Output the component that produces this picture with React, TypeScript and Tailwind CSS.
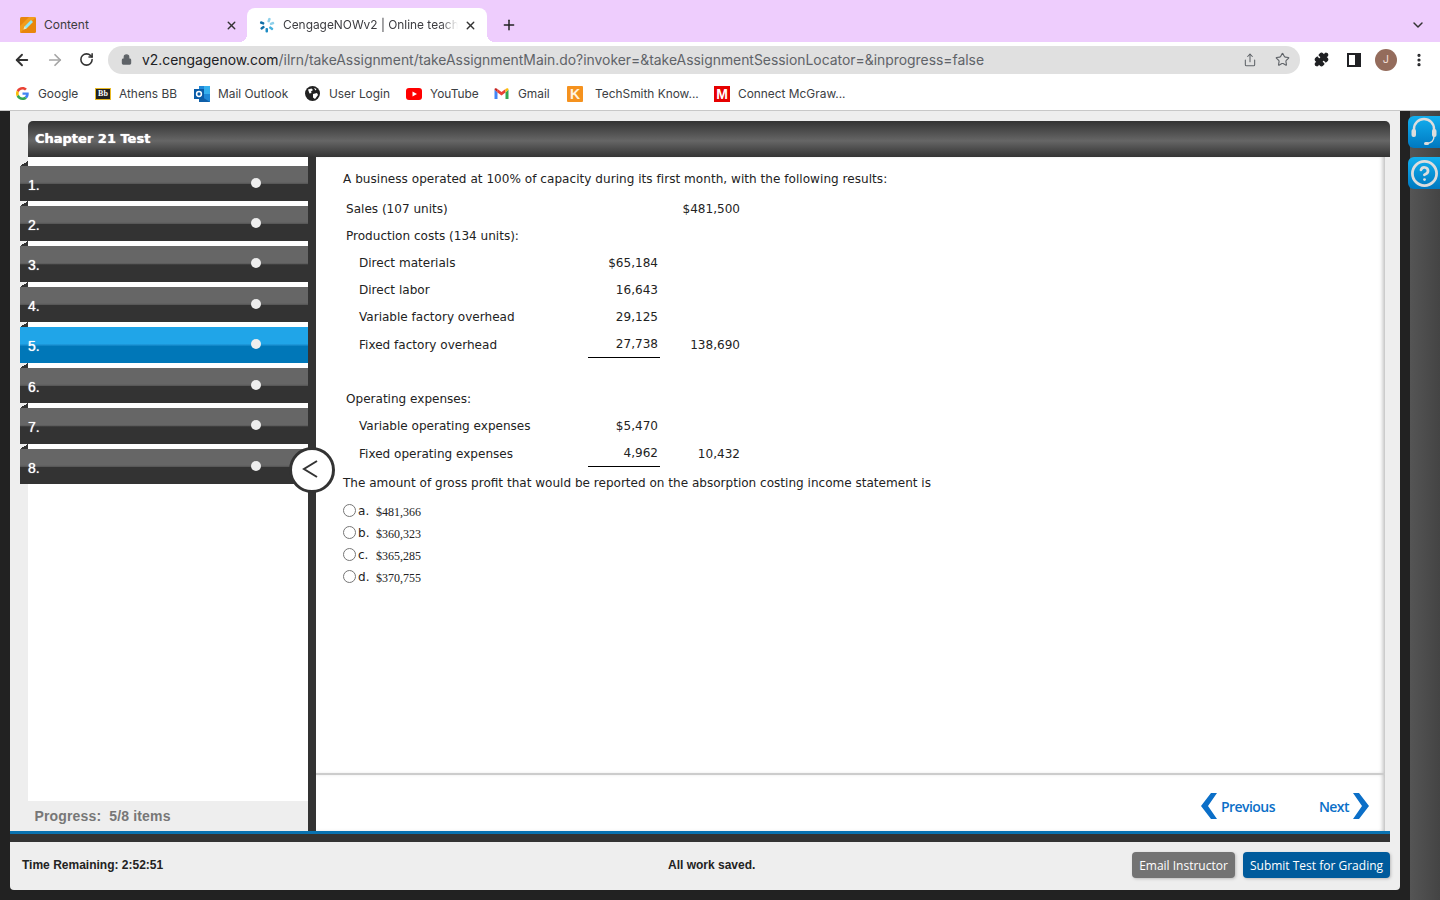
import React from "react";
import { ArrowLeft, ArrowRight, RotateCw, X, Plus, ChevronDown, Lock, Share, Star, Puzzle, MoreVertical, HelpCircle } from "lucide-react";

const Sans = "font-['Inter',sans-serif]";

function Favicon({ kind }: { kind: string }) {
  if (kind === "google")
    return (
      <svg width="13" height="13" viewBox="0 0 48 48">
        <path fill="#EA4335" d="M24 9.500c3.500 0 6.700 1.200 9.200 3.600l6.900-6.900C35.900 2.400 30.500 0 24 0 14.600 0 6.500 5.400 2.600 13.200l8 6.200C12.500 13.700 17.800 9.500 24 9.500z" />
        <path fill="#4285F4" d="M47 24.500c0-1.600-.1-3.100-.4-4.500H24v9h12.900c-.6 3-2.200 5.500-4.700 7.200l7.700 6c4.500-4.200 7.100-10.300 7.100-17.700z" />
        <path fill="#FBBC05" d="M10.600 28.600c-.5-1.400-.8-3-.8-4.600s.3-3.200.8-4.600l-8-6.200C.9 16.500 0 20.100 0 24s.9 7.500 2.600 10.800l8-6.200z" />
        <path fill="#34A853" d="M24 48c6.500 0 11.900-2.100 15.900-5.800l-7.700-6c-2.200 1.400-4.900 2.300-8.200 2.300-6.200 0-11.500-4.200-13.400-9.900l-8 6.200C6.500 42.600 14.600 48 24 48z" />
      </svg>
    );
  if (kind === "bb")
    return (
      <span className="flex w-[16px] h-[12px] items-center justify-center bg-[#222] border border-[#e8b923] text-white text-[8px] font-bold font-['Liberation_Serif',serif] leading-none">Bb</span>
    );
  if (kind === "outlook")
    return (
      <svg width="16" height="16" viewBox="0 0 16 16">
        <rect x="5" y="0" width="11" height="16" fill="#1e88d8" />
        <rect x="10" y="0" width="6" height="8" fill="#35b0ee" />
        <path d="M5 9l11 7H5z" fill="#0f5fa8" />
        <rect x="0" y="3" width="10" height="10" fill="#0a5ca8" />
        <circle cx="5" cy="8" r="2.400" fill="none" stroke="#fff" strokeWidth="1.500" />
      </svg>
    );
  if (kind === "globe")
    return (
      <svg width="15" height="15" viewBox="0 0 15 15">
        <circle cx="7.500" cy="7.500" r="7.500" fill="#222" />
        <path d="M3 3.500l3.500-1 1.500 1.500-2 1.500.5 1.500-2 .5zM8 8l4-1 1 2-3 4-2-1.500zM9 2l2.500 1-1 1.500z" fill="#fff" />
      </svg>
    );
  if (kind === "youtube")
    return (
      <svg width="16" height="12" viewBox="0 0 16 12">
        <rect width="16" height="12" rx="3" fill="#f00" />
        <path d="M6.500 3.500L11 6l-4.500 2.500z" fill="#fff" />
      </svg>
    );
  if (kind === "gmail")
    return (
      <svg width="15" height="11" viewBox="0 0 14 11">
        <path d="M0 1.500V11h3V4.500z" fill="#4285F4" />
        <path d="M14 1.500V11h-3V4.500z" fill="#34A853" />
        <path d="M3 4.500L7 7.500l4-3V1L7 4 3 1z" fill="#EA4335" />
        <path d="M0 1.500C0 .3 1.500-.4 3 1v3.500z" fill="#C5221F" />
        <path d="M14 1.500C14 .3 12.500-.4 11 1v3.500z" fill="#FBBC05" />
      </svg>
    );
  if (kind === "k")
    return (
      <span className="flex w-[16px] h-[16px] items-center justify-center rounded-[1px] bg-[#f5921e] text-[#fff3e0] text-[14px] font-bold leading-none font-['Liberation_Sans',sans-serif]">K</span>
    );
  return (
    <span className="flex w-[16px] h-[16px] items-center justify-center bg-[#e60000] text-white text-[14px] font-bold leading-none font-['Liberation_Sans',sans-serif]">M</span>
  );
}

const bookmarks = [
  { k: "google", t: "Google", w: "w-[79px]", g: "ml-[6px]" },
  { k: "bb", t: "Athens BB", w: "w-[99px]", g: "ml-[8px]" },
  { k: "outlook", t: "Mail Outlook", w: "w-[111px]", g: "ml-[8px]" },
  { k: "globe", t: "User Login", w: "w-[101px]", g: "ml-[8px]" },
  { k: "youtube", t: "YouTube", w: "w-[88px]", g: "ml-[8px]" },
  { k: "gmail", t: "Gmail", w: "w-[73px]", g: "ml-[8px]" },
  { k: "k", t: "TechSmith Know...", w: "w-[147px]", g: "ml-[12px]" },
  { k: "m", t: "Connect McGraw...", w: "w-[150px]", g: "ml-[8px]" },
];

function Spinner() {
  return (
    <svg width="16" height="16" viewBox="0 0 16 16">
      <rect x="7" y="0.500" width="2.500" height="4.500" rx="1" fill="#8fd0ea" transform="rotate(20 8 8)" />
      <rect x="7" y="0.500" width="2.500" height="4.500" rx="1" fill="#8fd0ea" transform="rotate(70 8 8)" />
      <rect x="7" y="0.500" width="2.500" height="4.500" rx="1" fill="#46b0dc" transform="rotate(125 8 8)" />
      <rect x="7" y="0.500" width="2.500" height="4.500" rx="1" fill="#1d8cc4" transform="rotate(180 8 8)" />
      <rect x="7" y="0.500" width="2.500" height="4.500" rx="1" fill="#0f6fa8" transform="rotate(235 8 8)" />
      <rect x="7" y="0.500" width="2.500" height="4.500" rx="1" fill="#0f6fa8" transform="rotate(290 8 8)" />
    </svg>
  );
}

function BrowserChrome() {
  return (
    <div className={`${Sans} bg-white`}>
      <div className="flex h-[42px] bg-[#eecdfd] pt-[8px] pl-[8px] text-[12px] text-[#3c3c40]">
        <div className="flex w-[239px] h-[34px] items-center pl-[12px] pr-[9px]">
          <svg width="16" height="16" viewBox="0 0 16 16" className="shrink-0">
            <rect width="16" height="16" rx="1.500" fill="#e8860c" />
            <path d="M0 16L16 0H9L0 9z" fill="#f6a623" opacity="0.700" />
            <path d="M3.500 12.500l1-3 6.500-6.500 2 2-6.500 6.500z" fill="#8fe6f5" />
            <path d="M3.500 12.500l1-3 2 2z" fill="#f8e3b0" />
          </svg>
          <span className="ml-[8px] flex-1">Content</span>
          <X size={13} strokeWidth={2.500} className="text-[#333]" />
        </div>
        <div className="relative flex w-[240px] h-[34px] items-center rounded-t-[8px] bg-white pl-[12px] pr-[10px]">
          <span className="absolute -left-[8px] bottom-0 h-[8px] w-[8px] bg-[radial-gradient(circle_at_0_0,transparent_8px,#fff_8px)]" />
          <span className="absolute -right-[8px] bottom-0 h-[8px] w-[8px] bg-[radial-gradient(circle_at_100%_0,transparent_8px,#fff_8px)]" />
          <Spinner />
          <span className="ml-[8px] w-[175px] shrink-0 overflow-hidden whitespace-nowrap text-[11.900px] [mask-image:linear-gradient(90deg,#000_90%,transparent)]">CengageNOWv2 | Online teach</span>
          <X size={13} strokeWidth={2.500} className="ml-[6px] shrink-0 text-[#333]" />
        </div>
        <div className="flex h-[34px] w-[44px] items-center justify-center">
          <Plus size={16} strokeWidth={2.200} className="text-[#222]" />
        </div>
        <div className="flex-1" />
        <div className="flex h-[34px] w-[45px] items-center justify-center">
          <ChevronDown size={16} strokeWidth={2.200} className="text-[#333]" />
        </div>
      </div>
      <div className="flex h-[35px] items-center bg-white">
        <div className="flex w-[108px] items-center pl-[13px] gap-[15px]">
          <ArrowLeft size={18} strokeWidth={2.500} className="text-[#333]" />
          <ArrowRight size={18} strokeWidth={2.300} className="text-[#a5a5a5]" />
          <RotateCw size={15} strokeWidth={2.500} className="text-[#333]" />
        </div>
        <div className="flex h-[28px] w-[1192px] items-center rounded-[14px] bg-[#e0e0e0] pl-[13px] pr-[10px]">
          <Lock size={11} strokeWidth={2.500} fill="#5f6368" className="text-[#5f6368]" />
          <span className="ml-[10px] flex-1 whitespace-nowrap pt-[1px] text-[13.900px] text-[#5f6368]">
            <span className="text-[#202124]">v2.cengagenow.com</span>/ilrn/takeAssignment/takeAssignmentMain.do?invoker=&amp;takeAssignmentSessionLocator=&amp;inprogress=false
          </span>
          <Share size={14} strokeWidth={1.800} className="text-[#5f6368] mr-[18px]" />
          <Star size={15} strokeWidth={1.800} className="text-[#5f6368]" />
        </div>
        <div className="flex flex-1 items-center pl-[14px]">
          <Puzzle size={15} fill="#202124" className="text-[#202124]" />
          <div className="ml-[18px] flex h-[14px] w-[14px] justify-end border-[2px] border-[#202124] bg-white">
            <div className="h-full w-[4px] bg-[#202124]" />
          </div>
          <div className="ml-[14px] flex h-[22px] w-[22px] items-center justify-center rounded-full bg-[#946c5c] text-[11px] text-[#f0dcd4]">J</div>
          <MoreVertical size={16} strokeWidth={2.800} className="ml-[14px] text-[#202124]" />
        </div>
      </div>
      <div className="flex h-[34px] items-center pl-[16px] pt-[1px] border-b border-[#c8c8c8] text-[11.900px] text-[#3c4043]">
        {bookmarks.map((b) => (
          <div key={b.t} className={`flex items-center ${b.w}`}>
            <span className="flex w-[16px] items-center justify-start"><Favicon kind={b.k} /></span>
            <span className={`${b.g} whitespace-nowrap`}>{b.t}</span>
          </div>
        ))}
      </div>
    </div>
  );
}

const items = ["1.", "2.", "3.", "4.", "5.", "6.", "7.", "8."];

function NavItem({ n, active }: { n: string; active: boolean }) {
  return (
    <div className="relative h-[40.450px]">
      <div className="h-[5px] w-[8px] bg-[linear-gradient(to_top_left,#333_50%,transparent_50%)]" />
      <div className={`relative flex h-[35.500px] w-[288px] items-end pb-[5.500px] pl-[8px] text-[14px] text-white [text-shadow:0_0_1px_#fff] font-['Liberation_Sans',sans-serif] ${active ? "bg-[linear-gradient(#20a5e8_0,#20a5e8_46%,#1a8fd0_50%,#0077b8_54%,#0077b8_100%)]" : "bg-[linear-gradient(#666_0,#666_46%,#585858_50%,#333_52%,#333_100%)]"}`}>
        {n}
        <span className="absolute left-[230.500px] top-[12px] h-[10px] w-[10px] rounded-full bg-[#eee]" />
      </div>
    </div>
  );
}

function Row({ label, c2, c3, indent, line, pt = "" }: { label: string; c2?: string; c3?: string; indent?: boolean; line?: boolean; pt?: string }) {
  return (
    <div className={`grid h-[27px] grid-cols-[245px_72px_80px] items-center ${pt}`}>
      <div className={indent ? "pl-[16px]" : "pl-[3px]"}>{label}</div>
      <div className={`flex h-full items-center justify-end pr-[2px] ${line ? "border-b border-black" : ""}`}>{c2}</div>
      <div className="text-right">{c3}</div>
    </div>
  );
}

function Option({ l, v }: { l: string; v: string }) {
  return (
    <div className="flex h-[22px] items-center">
      <span className="h-[13px] w-[13px] rounded-full border border-[#767676] bg-white -translate-y-[1px]" />
      <span className="ml-[2px] w-[18px]">{l}</span>
      <span className="font-['Liberation_Serif',serif] text-[12px] text-[#222] pt-[1px]">{v}</span>
    </div>
  );
}

function Question() {
  return (
    <div className="flex-1 bg-white pl-[27px] pt-[15px] text-[12.050px] text-[#222] font-['DejaVu_Sans',sans-serif] shadow-[inset_-4px_0_4px_-2px_#bbb]">
      <p className="h-[15px] leading-[15px] tracking-[0.03px]">A business operated at 100% of capacity during its first month, with the following results:</p>
      <div className="mt-[9px] w-[397px]">
        <Row label="Sales (107 units)" c3="$481,500" />
        <Row label="Production costs (134 units):" />
        <Row label="Direct materials" c2="$65,184" indent />
        <Row label="Direct labor" c2="16,643" indent />
        <Row label="Variable factory overhead" c2="29,125" indent />
        <Row label="Fixed factory overhead" c2="27,738" c3="138,690" indent line pt="pt-[1px]" />
        <div className="h-[27.500px]" />
        <Row label="Operating expenses:" />
        <Row label="Variable operating expenses" c2="$5,470" indent />
        <Row label="Fixed operating expenses" c2="4,962" c3="10,432" indent line pt="pt-[2px]" />
      </div>
      <p className="mt-[9.500px] h-[15px] leading-[15px]">The amount of gross profit that would be reported on the absorption costing income statement is</p>
      <div className="mt-[9px]">
        <Option l="a." v="$481,366" />
        <Option l="b." v="$360,323" />
        <Option l="c." v="$365,285" />
        <Option l="d." v="$370,755" />
      </div>
    </div>
  );
}

function App() {
  return (
    <div className="relative flex h-[900px] w-[1440px] flex-col overflow-hidden">
      <BrowserChrome />
      <div className="relative flex flex-1 bg-[#222]">
        <div className="ml-[10px] flex h-[779px] w-[1390px] flex-col rounded-b-[4px] bg-[#eee] pt-[10px]">
          <div className="ml-[18px] flex h-[36px] w-[1362px] items-center rounded-t-[5px] bg-[linear-gradient(#333,#666_55%,#333)] pl-[7px] text-[13px] font-bold text-white [text-shadow:0_0_1px_#fff] font-['DejaVu_Sans',sans-serif]">
            Chapter 21 Test
          </div>
          <div className="flex h-[674px]">
            <div className="relative flex w-[298px] flex-col pl-[18px]">
              <div className="flex-1 bg-white" />
              <div className="flex h-[30px] items-center pl-[6.500px] text-[14px] font-bold tracking-[0.15px] text-[#777] font-['Liberation_Sans',sans-serif] whitespace-pre">Progress:  5/8 items</div>
              <div className="absolute left-[10px] top-[3.500px] w-[288px]">
                {items.map((n) => (
                  <NavItem key={n} n={n} active={n === "5."} />
                ))}
              </div>
            </div>
            <div className="w-[8px] bg-[#333]" />
            <div className="flex w-[1069px] flex-col">
              <Question />
              <div className="flex h-[58px] items-center justify-end gap-[44px] border-t-[2px] border-[#ccc] bg-white pr-[16px] pt-[6px] text-[14px] font-semibold tracking-[-0.55px] text-[#0b6fc8] font-['Open_Sans',sans-serif] shadow-[inset_-4px_0_4px_-2px_#bbb]">
                <div className="flex items-center gap-[4px]">
                  <svg width="16" height="26" viewBox="0 0 16 26"><polygon points="10,0 16,0 7,13 16,26 10,26 0,13" fill="#0b6fc8" /></svg>
                  <span>Previous</span>
                </div>
                <div className="flex items-center gap-[4px]">
                  <span>Next</span>
                  <svg width="16" height="26" viewBox="0 0 16 26"><polygon points="6,0 0,0 9,13 0,26 6,26 16,13" fill="#0b6fc8" /></svg>
                </div>
              </div>
            </div>
            <div className="flex-1" />
          </div>
          <div className="h-[3px] w-[1380px] bg-[#0a72b0]" />
          <div className="h-[8px] w-[1380px] bg-[#333]" />
          <div className="relative flex h-[48px] w-[1380px] items-center pb-[2px] pl-[12px] text-[12px] font-bold text-[#222] font-['Liberation_Sans',sans-serif]">
            <span className="w-[646px]">Time Remaining: 2:52:51</span>
            <span className="w-[464px]">All work saved.</span>
            <button className="h-[26px] w-[103px] rounded-[4px] bg-[#737373] pt-[1px] text-[12px] font-normal text-white font-['Open_Sans',sans-serif] shadow-[1px_1px_3px_#bbb]">Email Instructor</button>
            <button className="ml-[8px] h-[26px] w-[147px] rounded-[4px] bg-[#005b9c] pt-[1px] text-[12px] font-normal text-white font-['Open_Sans',sans-serif] shadow-[1px_1px_3px_#bbb]">Submit Test for Grading</button>
          </div>
        </div>
        <div className="ml-[10px] flex-1 bg-[linear-gradient(90deg,#555,#444)]" />

        <div className="absolute left-[289px] top-[336px] flex h-[46px] w-[46px] items-center justify-center rounded-full border-[3px] border-[#333] bg-white">
          <svg width="16" height="18" viewBox="0 0 16 18" className="-ml-[5px] -mt-[2px]"><polyline points="15,1 2,9 15,17" fill="none" stroke="#333" strokeWidth="2" /></svg>
        </div>
        <div className="absolute left-[1408px] top-[5px] flex h-[32px] w-[32px] items-center justify-center rounded-l-[6px] bg-[linear-gradient(#12b0f0,#0078c0)]">
          <svg width="26" height="30" viewBox="0 0 26 30" fill="none">
            <path d="M3 15V12a10 10 0 0 1 20 0v3" stroke="#ddd" strokeWidth="2.400" />
            <rect x="0.500" y="12" width="4.500" height="8" rx="2" fill="#ddd" />
            <rect x="21" y="12" width="4.500" height="8" rx="2" fill="#ddd" />
            <path d="M23 19c0 5-3 7-7 7.500" stroke="#ddd" strokeWidth="1.400" />
            <rect x="13" y="25" width="5" height="3" rx="1.500" fill="#ddd" />
          </svg>
        </div>
        <div className="absolute left-[1408px] top-[46px] flex h-[32px] w-[32px] items-center justify-center rounded-l-[6px] bg-[linear-gradient(#12b0f0,#0078c0)]">
          <HelpCircle size={29} strokeWidth={2.300} className="text-[#ddd]" />
        </div>
      </div>
    </div>
  );
}

export default App;
